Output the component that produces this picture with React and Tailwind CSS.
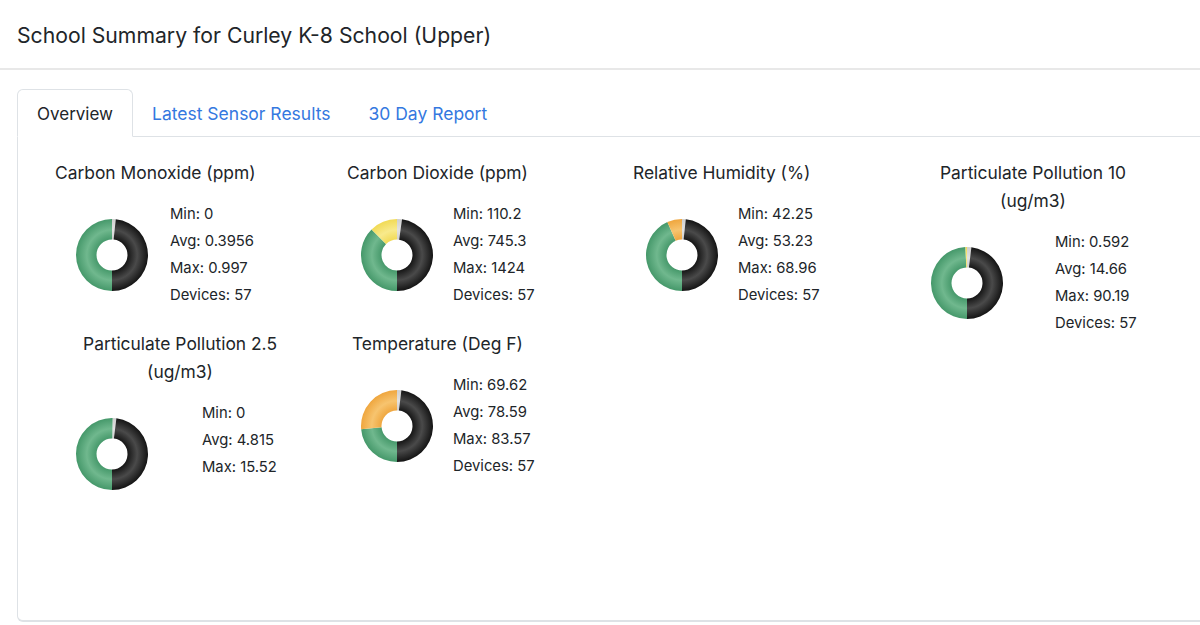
import React from "react";

// ring colours: [edge, middle of the band]
const SHADES = {
  gray: ["#cfcfcf", "#e2e2e2"],
  black: ["#141414", "#4a4a4a"],
  green: ["#45986a", "#70b88e"],
  yellow: ["#f1da55", "#f8ea8c"],
  orange: ["#efa63e", "#f7c46f"],
};

const R = 36;
const r = 15.5;
const C = 37;

function pt(rad, deg) {
  const a = (deg * Math.PI) / 180;
  return [C + rad * Math.sin(a), C - rad * Math.cos(a)];
}

function slice(a0, a1) {
  const large = a1 - a0 > 180 ? 1 : 0;
  const [x0, y0] = pt(R, a0);
  const [x1, y1] = pt(R, a1);
  const [x2, y2] = pt(r, a1);
  const [x3, y3] = pt(r, a0);
  return `M${x0} ${y0} A${R} ${R} 0 ${large} 1 ${x1} ${y1} L${x2} ${y2} A${r} ${r} 0 ${large} 0 ${x3} ${y3} Z`;
}

function Donut({ id, parts }) {
  return (
    <svg width="74" height="74" viewBox="0 0 74 74" className="shrink-0">
      <defs>
        {Object.entries(SHADES).map(([name, [edge, mid]]) => (
          <radialGradient
            key={name}
            id={`${id}-${name}`}
            gradientUnits="userSpaceOnUse"
            cx={C}
            cy={C}
            r={R}
          >
            <stop offset="0.42" stopColor={edge} />
            <stop offset="0.7" stopColor={mid} />
            <stop offset="1" stopColor={edge} />
          </radialGradient>
        ))}
      </defs>
      {parts.map(([color, a0, a1], i) => (
        <path key={i} d={slice(a0, a1)} fill={`url(#${id}-${color})`} />
      ))}
    </svg>
  );
}

const sensors = [
  {
    id: "co",
    title: "Carbon Monoxide (ppm)",
    titleCls: "ml-0",
    gapCls: "ml-[21px]",
    stats: ["Min: 0", "Avg: 0.3956", "Max: 0.997", "Devices: 57"],
    parts: [["gray", 0, 6], ["black", 6, 180], ["green", 180, 360]],
  },
  {
    id: "co2",
    title: "Carbon Dioxide (ppm)",
    titleCls: "ml-[7px]",
    gapCls: "ml-[19px]",
    stats: ["Min: 110.2", "Avg: 745.3", "Max: 1424", "Devices: 57"],
    parts: [["gray", 0, 8], ["black", 8, 180], ["green", 180, 315], ["yellow", 315, 360]],
  },
  {
    id: "rh",
    title: "Relative Humidity (%)",
    titleCls: "ml-[8px]",
    gapCls: "ml-[19px]",
    stats: ["Min: 42.25", "Avg: 53.23", "Max: 68.96", "Devices: 57"],
    parts: [["gray", 0, 6], ["black", 6, 180], ["green", 180, 336], ["orange", 336, 360]],
  },
  {
    id: "pm10",
    title: "Particulate Pollution 10 (ug/m3)",
    titleCls: "ml-[18px] w-[210px] text-center",
    gapCls: "ml-[51px]",
    stats: ["Min: 0.592", "Avg: 14.66", "Max: 90.19", "Devices: 57"],
    parts: [["gray", 0, 7], ["black", 7, 180], ["green", 180, 357.5], ["yellow", 357.5, 360]],
  },
  {
    id: "pm25",
    title: "Particulate Pollution 2.5 (ug/m3)",
    titleCls: "ml-[20px] w-[210px] text-center",
    gapCls: "ml-[53px]",
    stats: ["Min: 0", "Avg: 4.815", "Max: 15.52"],
    parts: [["gray", 1, 7], ["black", 7, 180], ["green", 180, 361]],
  },
  {
    id: "temp",
    title: "Temperature (Deg F)",
    titleCls: "ml-[12px]",
    gapCls: "ml-[19px]",
    stats: ["Min: 69.62", "Avg: 78.59", "Max: 83.57", "Devices: 57"],
    parts: [["gray", 0, 7], ["black", 7, 180], ["green", 180, 265], ["orange", 265, 360]],
  },
];

function SensorCard({ s }) {
  return (
    <div className="flex flex-col">
      <div className={`text-[17.4px] leading-[28px] text-[#212529] ${s.titleCls}`}>
        {s.title}
      </div>
      <div className="mt-[14px] flex items-center">
        <div className="ml-5">
          <Donut id={s.id} parts={s.parts} />
        </div>
        <div className={`min-h-[108px] text-[14.8px] leading-[27px] text-[#212529] ${s.gapCls}`}>
          {s.stats.map((line) => (
            <div key={line} className="whitespace-nowrap">
              {line}
            </div>
          ))}
        </div>
      </div>
    </div>
  );
}

export default function App() {
  return (
    <div className="h-[625px] w-[1200px] overflow-hidden bg-white font-['Inter',sans-serif] text-[#212529]">
      <div className="flex h-[70px] items-center border-b-2 border-[#e8e8e8] px-[17px] pt-[3px]">
        <h1 className="text-[21.2px] font-normal">
          School Summary for Curley K-8 School (Upper)
        </h1>
      </div>

      <div className="pl-[17px] pt-[19px]">
        <ul className="flex border-b border-[#dee2e6] text-[17px]">
          <li className="-mb-px flex h-[48px] items-center rounded-t-[6px] border border-b-white border-[#dee2e6] bg-white px-[19px] pt-[3px]">
            Overview
          </li>
          <li className="flex h-[47px] items-center px-[19px] pt-[3px] text-[17.5px] text-[#3478e0]">
            Latest Sensor Results
          </li>
          <li className="flex h-[47px] items-center px-[19px] pt-[3px] text-[17.5px] text-[#3478e0]">
            30 Day Report
          </li>
        </ul>

        <div className="h-[485px] rounded-bl-[6px] border-b-2 border-l border-[#dee2e6] pl-[37px] pt-[22px]">
          <div className="grid grid-cols-[285px_285px_285px_285px] grid-rows-[171px_auto]">
            {sensors.map((s) => (
              <SensorCard key={s.id} s={s} />
            ))}
          </div>
        </div>
      </div>
    </div>
  );
}
